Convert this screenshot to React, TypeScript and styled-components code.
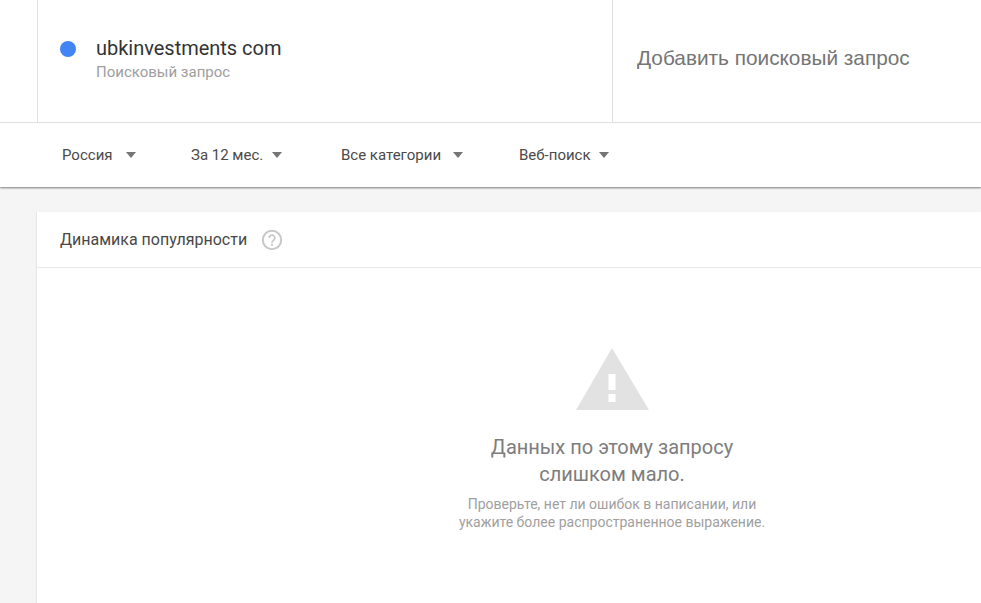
import styled, { createGlobalStyle } from "styled-components";

const GlobalStyle = createGlobalStyle`
  html, body {
    margin: 0;
    padding: 0;
    background: #f5f5f5;
    font-family: Roboto, "Noto Sans", sans-serif;
    overflow: hidden;
  }
`;

const Page = styled.div`
  width: 981px;
  height: 603px;
  overflow: hidden;
`;

const Header = styled.header`
  background: #fff;
  box-shadow: 0 1px 2px rgba(0, 0, 0, 0.5);
`;

const TermsRow = styled.div`
  display: flex;
  height: 122px;
  padding-left: 37px;
  border-bottom: 1px solid #e0e0e0;
`;

const TermCell = styled.div`
  width: 576px;
  flex: none;
  box-sizing: border-box;
  display: flex;
  align-items: flex-start;
  padding: 36px 0 0 22px;
  border-left: 1px solid #e0e0e0;
  border-right: 1px solid #e0e0e0;
`;

const Dot = styled.span`
  width: 16px;
  height: 16px;
  margin-top: 5px;
  border-radius: 50%;
  background: #4285f4;
  flex: none;
`;

const TermText = styled.div`
  margin-left: 20px;
`;

const TermName = styled.div`
  font-size: 20px;
  line-height: 24px;
  letter-spacing: -0.02px;
  color: #333;
`;

const TermKind = styled.div`
  font-size: 15px;
  line-height: 18px;
  margin-top: 3px;
  color: #9e9e9e;
`;

const AddTerm = styled.div`
  padding: 46px 0 0 24px;
  font-family: "Liberation Sans", Arial, sans-serif;
  font-size: 20.8px;
  line-height: 24px;
  color: #757575;
`;

const FilterRow = styled.div`
  display: flex;
  height: 64px;
  align-items: center;
  padding-left: 62px;
`;

const Filter = styled.div<{ $width: number; $gap: number }>`
  width: ${(p) => p.$width}px;
  flex: none;
  display: flex;
  align-items: center;
  gap: ${(p) => p.$gap}px;
  font-size: 15px;
  color: #4a4a4a;
  white-space: nowrap;
`;

const Caret = styled.span`
  width: 0;
  height: 0;
  border-left: 5.5px solid transparent;
  border-right: 5.5px solid transparent;
  border-top: 6px solid #757575;
`;

const Main = styled.main`
  padding: 25px 0 0 37px;
`;

const Card = styled.section`
  background: #fff;
  height: 420px;
  box-shadow: -1px 0 1px rgba(0, 0, 0, 0.06);
`;

const CardHeader = styled.div`
  display: flex;
  align-items: center;
  gap: 14px;
  height: 56px;
  box-sizing: border-box;
  padding-left: 23px;
  border-bottom: 1px solid #e8e8e8;
  font-size: 16px;
  color: #484848;
`;

const Empty = styled.div`
  display: flex;
  flex-direction: column;
  align-items: center;
  width: 306px;
  margin-left: 422px;
  padding-top: 79px;
  text-align: center;
`;

const EmptyTitle = styled.div`
  margin-top: 23px;
  font-size: 20px;
  line-height: 27px;
  color: #7d7d7d;
`;

const EmptyHint = styled.div`
  margin-top: 7px;
  font-size: 14px;
  line-height: 18px;
  color: #a0a0a0;
  white-space: nowrap;
`;

function HelpIcon() {
  return (
    <svg width="22" height="22" viewBox="0 0 22 22" fill="none">
      <circle cx="11" cy="11" r="9.2" stroke="#c8c8c8" strokeWidth="2" />
      <path
        d="M8.2 8.9a2.8 2.8 0 1 1 4.5 2.2c-1 .8-1.7 1.2-1.7 2.6"
        stroke="#c8c8c8"
        strokeWidth="1.7"
      />
      <rect x="10" y="14.8" width="2" height="2" fill="#c8c8c8" />
    </svg>
  );
}

function WarningIcon() {
  return (
    <svg width="74" height="64" viewBox="0 0 74 64">
      <path d="M37 1 L74 63 H1 Z" fill="#e2e2e2" />
      <rect x="33.500" y="27" width="7" height="16" fill="#fff" />
      <rect x="33.500" y="47" width="7" height="8" fill="#fff" />
    </svg>
  );
}

const filters = [
  { label: "Россия", width: 129, gap: 13 },
  { label: "За 12 мес.", width: 150, gap: 9 },
  { label: "Все категории", width: 178, gap: 12 },
  { label: "Веб-поиск", width: 120, gap: 8 },
];

export default function App() {
  return (
    <Page>
      <GlobalStyle />
      <Header>
        <TermsRow>
          <TermCell>
            <Dot />
            <TermText>
              <TermName>ubkinvestments com</TermName>
              <TermKind>Поисковый запрос</TermKind>
            </TermText>
          </TermCell>
          <AddTerm>Добавить поисковый запрос</AddTerm>
        </TermsRow>
        <FilterRow>
          {filters.map((f) => (
            <Filter key={f.label} $width={f.width} $gap={f.gap}>
              {f.label}
              <Caret />
            </Filter>
          ))}
        </FilterRow>
      </Header>
      <Main>
        <Card>
          <CardHeader>
            Динамика популярности
            <HelpIcon />
          </CardHeader>
          <Empty>
            <WarningIcon />
            <EmptyTitle>
              Данных по этому запросу
              <br />
              слишком мало.
            </EmptyTitle>
            <EmptyHint>
              Проверьте, нет ли ошибок в написании, или
              <br />
              укажите более распространенное выражение.
            </EmptyHint>
          </Empty>
        </Card>
      </Main>
    </Page>
  );
}
